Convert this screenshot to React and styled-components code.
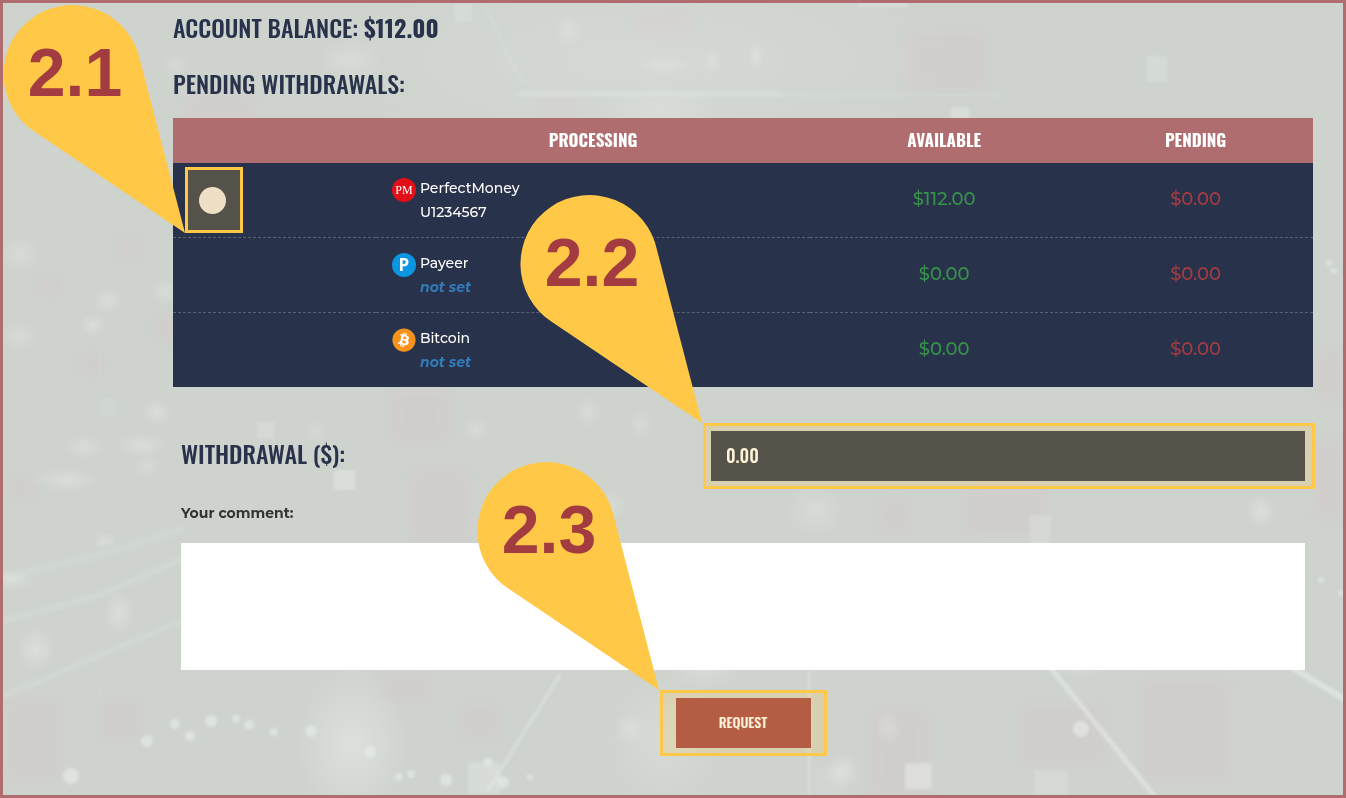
import React, { useState } from "react";
import styled, { createGlobalStyle } from "styled-components";
import { FaBitcoin } from "react-icons/fa";

const systems = [
  { id: "pm", name: "PerfectMoney", account: "U1234567", available: "$112.00", pending: "$0.00" },
  { id: "payeer", name: "Payeer", account: null, available: "$0.00", pending: "$0.00" },
  { id: "btc", name: "Bitcoin", account: null, available: "$0.00", pending: "$0.00" },
];

// [cx, cy, rx, ry, opacity]
const glows = [
  [640, 60, 220, 70, 0.16],
  [665, 65, 17, 7, 0.2],
  [568, 30, 9, 12, 0.2],
  [756, 55, 6, 10, 0.25],
  [712, 62, 6, 10, 0.2],
  [660, 112, 40, 18, 0.2],
  [350, 60, 22, 14, 0.22],
  [176, 66, 9, 9, 0.18],
  [20, 254, 14, 12, 0.2],
  [19, 336, 12, 10, 0.2],
  [108, 301, 9, 9, 0.24],
  [93, 325, 9, 8, 0.24],
  [166, 291, 10, 9, 0.22],
  [157, 412, 10, 9, 0.25],
  [84, 447, 13, 8, 0.24],
  [142, 445, 17, 8, 0.25],
  [65, 480, 22, 8, 0.25],
  [147, 466, 9, 8, 0.18],
  [105, 541, 8, 6, 0.25],
  [476, 430, 8, 9, 0.2],
  [316, 431, 8, 8, 0.14],
  [588, 412, 9, 11, 0.2],
  [641, 424, 8, 10, 0.2],
  [612, 505, 9, 10, 0.2],
  [815, 510, 20, 18, 0.2],
  [1261, 511, 10, 11, 0.3],
  [119, 613, 10, 15, 0.28],
  [36, 649, 13, 15, 0.3],
  [12, 580, 16, 7, 0.28],
  [352, 745, 38, 52, 0.34],
  [704, 670, 26, 13, 0.22],
  [665, 740, 40, 45, 0.2],
  [630, 728, 10, 12, 0.22],
  [1078, 665, 20, 8, 0.2],
  [889, 728, 9, 12, 0.2],
  [843, 771, 12, 12, 0.32],
];

const dots = [
  [147, 741, 6],
  [175, 724, 5],
  [190, 736, 5],
  [211, 721, 6],
  [236, 719, 4],
  [249, 725, 5],
  [274, 732, 4],
  [311, 731, 6],
  [370, 752, 6],
  [71, 776, 8],
  [399, 777, 4],
  [411, 774, 4],
  [446, 780, 6],
  [488, 762, 4],
  [503, 782, 6],
  [530, 777, 3],
  [1081, 729, 8],
  [1329, 263, 3],
  [1334, 271, 3],
  [1321, 580, 3],
  [1341, 593, 3],
];

// [x, y, width, height, opacity]
const blocks = [
  [454, 4, 18, 18, 0.25],
  [1147, 56, 20, 26, 0.26],
  [951, 107, 18, 14, 0.4],
  [858, 2, 50, 5, 0.35],
  [334, 470, 21, 20, 0.45],
  [257, 421, 18, 18, 0.28],
  [100, 398, 17, 18, 0.12],
  [1029, 515, 22, 34, 0.25],
  [905, 763, 27, 26, 0.5],
  [1034, 770, 34, 26, 0.28],
  [468, 762, 32, 32, 0.35],
  [814, 768, 30, 28, 0.15],
];

const stains = [
  [185, 95, 70, 30],
  [905, 32, 80, 58],
  [540, 95, 40, 20],
  [632, 10, 60, 28],
  [118, 236, 22, 24],
  [36, 276, 22, 18],
  [152, 318, 24, 20],
  [80, 354, 22, 20],
  [8, 478, 28, 20],
  [390, 392, 60, 50],
  [410, 470, 60, 70],
  [880, 500, 30, 34],
  [965, 485, 80, 50],
  [5, 700, 55, 80],
  [100, 700, 40, 40],
  [380, 675, 50, 26],
  [460, 705, 40, 32],
  [870, 710, 60, 86],
  [1020, 705, 85, 60],
  [1140, 680, 90, 100],
  [1314, 440, 28, 80],
  [1316, 350, 26, 50],
];

const Scenery = () => (
  <SceneryDrawing viewBox="0 0 1346 798" preserveAspectRatio="xMidYMid slice" aria-hidden="true">
    <defs>
      <filter id="soft" x="-50%" y="-50%" width="200%" height="200%">
        <feGaussianBlur stdDeviation="6" />
      </filter>
      <filter id="slight" filterUnits="userSpaceOnUse" x="0" y="0" width="1346" height="798">
        <feGaussianBlur stdDeviation="1.5" />
      </filter>
      <radialGradient id="glow">
        <stop offset="0" stopColor="#e9eeea" />
        <stop offset="1" stopColor="#e9eeea" stopOpacity="0" />
      </radialGradient>
    </defs>
    <g fill="#d1cecc" opacity="0.9" filter="url(#soft)">
      {stains.map(([x, y, w, h]) => (
        <rect key={`${x}-${y}`} x={x} y={y} width={w} height={h} />
      ))}
    </g>
    <g fill="url(#glow)">
      {glows.map(([x, y, rx, ry, o]) => (
        <ellipse key={`${x}-${y}`} cx={x} cy={y} rx={rx * 1.5} ry={ry * 1.5} opacity={o * 1.5} />
      ))}
    </g>
    <g fill="#e9eeea" filter="url(#slight)">
      {blocks.map(([x, y, w, h, o]) => (
        <rect key={`${x}-${y}`} x={x} y={y} width={w} height={h} opacity={o} />
      ))}
      {dots.map(([x, y, r]) => (
        <circle key={`${x}-${y}`} cx={x} cy={y} r={r} opacity="0.6" />
      ))}
    </g>
    <g fill="none" stroke="#e9eeea" strokeLinecap="round" filter="url(#slight)">
      <path d="M520 94H780" strokeWidth="5" opacity="0.3" />
      <path d="M780 95H1000" strokeWidth="4" opacity="0.12" />
      <path d="M487 8L500 40M500 40L522 82" strokeWidth="3" opacity="0.22" />
      <path d="M560 675L488 790" strokeWidth="3" opacity="0.5" />
      <path d="M1052 670L1080 704L1122 756L1156 798" strokeWidth="5" opacity="0.55" />
      <path d="M1296 670L1346 700" strokeWidth="6" opacity="0.6" />
      <path d="M809 672V796" strokeWidth="3" opacity="0.4" />
      <path d="M0 578L100 555L180 530" strokeWidth="8" opacity="0.16" />
      <path d="M0 622L100 595L180 560" strokeWidth="7" opacity="0.18" />
      <path d="M0 698L100 655L180 622" strokeWidth="6" opacity="0.18" />
    </g>
    <path d="M100 230V700" stroke="#dbdedb" strokeWidth="1" opacity="0.4" />
  </SceneryDrawing>
);

const SystemIcon = ({ id }) => {
  if (id === "btc") {
    return (
      <BitcoinBadge>
        <FaBitcoin size={24} />
      </BitcoinBadge>
    );
  }
  if (id === "payeer") {
    return <Badge $color="#0b96e2">P</Badge>;
  }
  return (
    <Badge $color="#e30f18" $serif>
      PM
    </Badge>
  );
};

const Callout = ({ label, inside }) => (
  <Pin viewBox="0 0 182 228" $inside={inside} role="img" aria-label={`Step ${label}`}>
    <path d="M137 55A69 69 0 1 0 32 127L182 228Z" fill="#ffc947" />
    <PinText x="72" y="91" textAnchor="middle">
      {label}
    </PinText>
  </Pin>
);

const App = () => {
  const [selected, setSelected] = useState("pm");
  const [amount, setAmount] = useState("0.00");
  const [comment, setComment] = useState("");

  const onSubmit = (e) => {
    e.preventDefault();
  };

  return (
    <>
      <GlobalStyle />
      <Page>
        <Scenery />
        <Title>
          Account Balance: <b>$112.00</b>
        </Title>
        <Title>Pending withdrawals:</Title>
        <form onSubmit={onSubmit}>
          <Table>
            <colgroup>
              <Col $width="17.8%" />
              <Col $width="38.1%" />
              <Col $width="23.5%" />
              <Col $width="20.6%" />
            </colgroup>
            <thead>
              <tr>
                <Th />
                <Th>Processing</Th>
                <Th>Available</Th>
                <Th>Pending</Th>
              </tr>
            </thead>
            <tbody>
              {systems.map((item) => (
                <Row key={item.id}>
                  <PickCell>
                    {item.account && (
                      <RadioMark>
                        <Radio
                          type="radio"
                          name="system"
                          aria-label={item.name}
                          checked={selected === item.id}
                          onChange={() => setSelected(item.id)}
                        />
                        <Callout label="2.1" inside />
                      </RadioMark>
                    )}
                  </PickCell>
                  <Cell>
                    <System>
                      <SystemIcon id={item.id} />
                      <div>
                        <div>{item.name}</div>
                        {item.account ? <div>{item.account}</div> : <NotSet href="#account">not set</NotSet>}
                      </div>
                    </System>
                  </Cell>
                  <Money $color="#37924b">{item.available}</Money>
                  <Money $color="#a33c43">{item.pending}</Money>
                </Row>
              ))}
            </tbody>
          </Table>
          <Fields>
            <AmountRow>
              <AmountLabel htmlFor="amount">Withdrawal ($):</AmountLabel>
              <AmountMark>
                <AmountInput id="amount" value={amount} onChange={(e) => setAmount(e.target.value)} />
                <Callout label="2.2" />
              </AmountMark>
            </AmountRow>
            <CommentLabel htmlFor="comment">Your comment:</CommentLabel>
            <CommentArea id="comment" value={comment} onChange={(e) => setComment(e.target.value)} />
            <ButtonMark>
              <RequestBtn type="submit">Request</RequestBtn>
              <Callout label="2.3" />
            </ButtonMark>
          </Fields>
        </form>
      </Page>
    </>
  );
};

export default App;

const narrow = `"Oswald", "Liberation Sans Narrow", "Liberation Sans", sans-serif`;

const GlobalStyle = createGlobalStyle`
  * {
    box-sizing: border-box;
  }
  body {
    margin: 0;
    font-family: "Montserrat", Inter, sans-serif;
    font-size: 14px;
    line-height: 24px;
    color: #333333;
  }
`;

const Page = styled.main`
  position: relative;
  z-index: 0;
  min-height: 100vh;
  overflow: hidden;
  padding: 9px 30px 38px 170px;
  border: 3px solid #b06d6f;
  background: #ced3ce;
`;

const SceneryDrawing = styled.svg`
  position: absolute;
  z-index: -1;
  inset: -3px;
  width: calc(100% + 6px);
  height: calc(100% + 6px);
`;

const Title = styled.h2`
  margin: 0 0 26px;
  font-family: ${narrow};
  font-size: 24px;
  font-weight: 500;
  line-height: 30px;
  text-transform: uppercase;
  color: #28324a;

  & + & {
    margin-bottom: 20px;
  }
  b {
    font-weight: 700;
  }
`;

const Table = styled.table`
  width: 100%;
  table-layout: fixed;
  border-collapse: separate;
  border-spacing: 0;
`;

const Col = styled.col`
  width: ${({ $width }) => $width};
`;

const Th = styled.th`
  height: 45px;
  padding: 0 0 2px;
  background: #b06d6f;
  font-family: ${narrow};
  font-size: 17px;
  font-weight: 700;
  text-transform: uppercase;
  color: #ffffff;
`;

const Row = styled.tr`
  background: #28324a;
  color: #ffffff;
`;

const Cell = styled.td`
  height: 74px;
  padding: 0;

  ${Row}:not(:last-child) & {
    height: 75px;
    border-bottom: 1px dashed #596275;
  }
`;

const PickCell = styled(Cell)`
  padding-left: 12px;
`;

const Money = styled(Cell)`
  padding-bottom: 2px;
  font-size: 18px;
  font-weight: 500;
  text-align: center;
  color: ${({ $color }) => $color};
`;

// marked area: tinted yellow frame drawn over the control
const Mark = styled.div`
  position: relative;

  &::after {
    content: "";
    position: absolute;
    inset: 0;
    border: 3px solid #ffc947;
    background: rgba(255, 201, 71, 0.21);
    pointer-events: none;
  }
`;

const RadioMark = styled(Mark)`
  display: flex;
  align-items: center;
  width: 58px;
  height: 66px;
  padding-left: 14px;
`;

const Radio = styled.input`
  appearance: none;
  width: 27px;
  height: 27px;
  margin: 0;
  border-radius: 50%;
  background: #e9e6e6;
`;

const System = styled.div`
  display: flex;
  align-items: flex-start;
  gap: 4px;
  padding-left: 16px;
  font-weight: 500;
`;

const Badge = styled.span`
  display: grid;
  place-items: center;
  width: 24px;
  height: 24px;
  margin-top: 2px;
  border-radius: 50%;
  background: ${({ $color }) => $color};
  font-family: ${({ $serif }) => ($serif ? `"Liberation Serif", serif` : `"Open Sans", sans-serif`)};
  font-size: ${({ $serif }) => ($serif ? "12px" : "17px")};
  font-weight: ${({ $serif }) => ($serif ? 400 : 700)};
  color: #ffffff;
`;

const BitcoinBadge = styled.span`
  display: flex;
  margin-top: 2px;
  border-radius: 50%;
  background: radial-gradient(#ffffff 60%, transparent 61%);
  color: #f7931a;
`;

const NotSet = styled.a`
  font-style: italic;
  font-weight: 700;
  text-decoration: none;
  color: #337ab7;
`;

const Fields = styled.div`
  display: flex;
  flex-direction: column;
  padding: 44px 8px 0;
`;

const AmountRow = styled.div`
  display: grid;
  grid-template-columns: 530fr 594fr;
  align-items: center;
`;

const AmountLabel = styled.label`
  padding-bottom: 6px;
  font-family: ${narrow};
  font-size: 24px;
  font-weight: 500;
  text-transform: uppercase;
  color: #28324a;
`;

const AmountMark = styled(Mark)`
  margin: -8px -10px -8px -8px;
  padding: 8px 10px 8px 8px;
`;

const AmountInput = styled.input`
  display: block;
  width: 100%;
  height: 50px;
  padding: 0 15px 2px;
  border: 0;
  background: #28324a;
  font-family: ${narrow};
  font-size: 18px;
  font-weight: 500;
  color: #ffffff;
`;

const CommentLabel = styled.label`
  margin: 20px 0 18px;
  font-weight: 700;
`;

const CommentArea = styled.textarea`
  display: block;
  width: 100%;
  height: 127px;
  padding: 10px;
  border: 0;
  resize: none;
  background: #ffffff;
  font: inherit;
`;

const ButtonMark = styled(Mark)`
  align-self: center;
  margin-top: 20px;
  padding: 8px 16px;
`;

const RequestBtn = styled.button`
  display: block;
  width: 135px;
  height: 50px;
  padding: 0 0 4px;
  border: 0;
  background: #a24042;
  font-family: ${narrow};
  font-size: 14px;
  font-weight: 500;
  text-transform: uppercase;
  color: #ffffff;
`;

const Pin = styled.svg`
  position: absolute;
  z-index: 1;
  right: ${({ $inside }) => ($inside ? "100%" : "calc(100% + 1px)")};
  bottom: ${({ $inside }) => ($inside ? "0" : "100%")};
  width: 182px;
  height: 228px;
  pointer-events: none;
`;

const PinText = styled.text`
  font-family: "Liberation Sans", sans-serif;
  font-size: 68px;
  font-weight: 700;
  fill: #a33c41;
`;
